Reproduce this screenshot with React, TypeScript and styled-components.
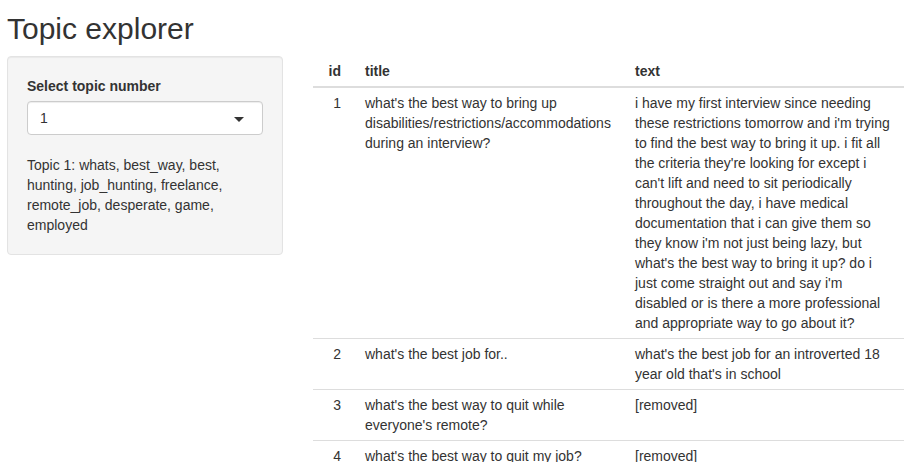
import React from "react";
import styled, { createGlobalStyle } from "styled-components";

const GlobalStyle = createGlobalStyle`
  html, body {
    margin: 0;
    padding: 0;
    background: #fff;
  }
  body {
    font-family: "Liberation Sans", Arial, sans-serif;
    font-size: 14px;
    line-height: 20px;
    color: #333;
  }
  * {
    box-sizing: border-box;
  }
`;

const Page = styled.div`
  padding: 0 4px 0 7px;
`;

const Title = styled.h2`
  margin: 12px 0 11px;
  font-size: 30px;
  font-weight: 500;
  line-height: 33px;
`;

const Layout = styled.div`
  display: grid;
  grid-template-columns: 276px 591px;
  column-gap: 30px;
  align-items: start;
`;

const Well = styled.div`
  padding: 19px;
  background: #f5f5f5;
  border: 1px solid #e3e3e3;
  border-radius: 4px;
  box-shadow: inset 0 1px 1px rgba(0, 0, 0, 0.05);
`;

const FormGroup = styled.div`
  margin-bottom: 20px;
`;

const Label = styled.label`
  display: block;
  font-weight: 700;
  margin-bottom: 5px;
`;

const SelectBox = styled.div`
  position: relative;
  height: 34px;
  display: flex;
  align-items: center;
  padding: 0 12px;
  background: #fff;
  border: 1px solid #ccc;
  border-radius: 4px;
  box-shadow: inset 0 1px 1px rgba(0, 0, 0, 0.075);
`;

const Caret = styled.span`
  position: absolute;
  right: 18px;
  top: 15px;
  width: 0;
  height: 0;
  border-style: solid;
  border-width: 5px 5px 0 5px;
  border-color: #333 transparent transparent transparent;
`;

const Description = styled.div`
  margin: 0;
`;

const Table = styled.table`
  width: 591px;
  table-layout: fixed;
  border-collapse: collapse;
  border-spacing: 0;
`;

const Th = styled.th<{ $align?: string }>`
  padding: 5px 12px;
  text-align: ${(p) => p.$align || "left"};
  font-weight: 700;
  vertical-align: bottom;
  border-bottom: 2px solid #ddd;
`;

const Td = styled.td<{ $align?: string }>`
  padding: 5px 12px;
  text-align: ${(p) => p.$align || "left"};
  vertical-align: top;
  border-top: 1px solid #ddd;
`;

const rows = [
  {
    id: 1,
    title:
      "what's the best way to bring up disabilities/restrictions/accommodations during an interview?",
    text:
      "i have my first interview since needing these restrictions tomorrow and i'm trying to find the best way to bring it up. i fit all the criteria they're looking for except i can't lift and need to sit periodically throughout the day, i have medical documentation that i can give them so they know i'm not just being lazy, but what's the best way to bring it up? do i just come straight out and say i'm disabled or is there a more professional and appropriate way to go about it?",
  },
  {
    id: 2,
    title: "what's the best job for..",
    text: "what's the best job for an introverted 18 year old that's in school",
  },
  {
    id: 3,
    title: "what's the best way to quit while everyone's remote?",
    text: "[removed]",
  },
  {
    id: 4,
    title: "what's the best way to quit my job?",
    text: "[removed]",
  },
];

export default function App() {
  return (
    <Page>
      <GlobalStyle />
      <Title>Topic explorer</Title>
      <Layout>
        <Well>
          <FormGroup>
            <Label>Select topic number</Label>
            <SelectBox>
              1
              <Caret />
            </SelectBox>
          </FormGroup>
          <Description>
            Topic 1: whats, best_way, best, hunting, job_hunting, freelance,
            remote_job, desperate, game, employed
          </Description>
        </Well>
        <Table>
          <colgroup>
            <col style={{ width: 40 }} />
            <col style={{ width: 270 }} />
            <col style={{ width: 281 }} />
          </colgroup>
          <thead>
            <tr>
              <Th $align="right">id</Th>
              <Th>title</Th>
              <Th>text</Th>
            </tr>
          </thead>
          <tbody>
            {rows.map((r) => (
              <tr key={r.id}>
                <Td $align="right">{r.id}</Td>
                <Td>{r.title}</Td>
                <Td>{r.text}</Td>
              </tr>
            ))}
          </tbody>
        </Table>
      </Layout>
    </Page>
  );
}
